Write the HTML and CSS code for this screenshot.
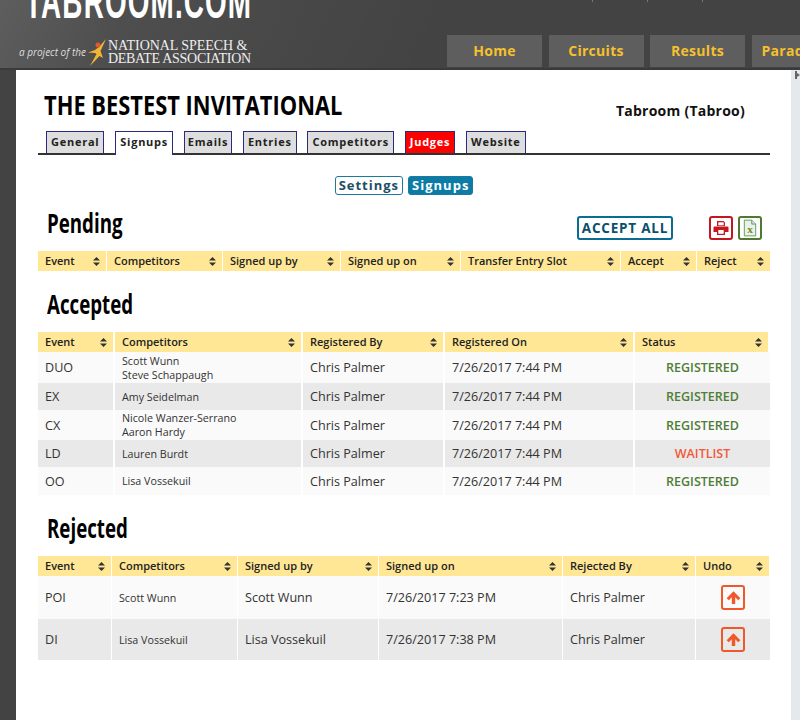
FILE: index.html
```html
<!DOCTYPE html>
<html lang="en">
<head>
<meta charset="utf-8">
<title>Tabroom</title>
<link rel="stylesheet" href="styles.css">
</head>
<body>
<header class="site-head">
  <div class="brand">
    <div class="wordmark"><span class="wordmark-text">TABROOM.COM</span></div>
    <div class="project">
      <span class="project-of">a project of the</span>
      <svg class="nsda-mark" viewBox="0 0 20 30" width="20" height="30" aria-hidden="true">
        <path d="M18 2 L11 10 L7 13 L0 15.5 L7 16 L8.5 17 L2 29 L11.5 19 L15 21 L12.5 14 Z" fill="#f2b632"/>
        <circle cx="10" cy="8" r="2.5" fill="#e4572e"/>
      </svg>
      <span class="nsda-name"><span class="nsda-top">NATIONAL SPEECH &amp;</span><span>DEBATE ASSOCIATION</span></span>
    </div>
  </div>
  <div class="head-right">
    <div class="ticks"><span></span><span></span><span></span></div>
    <nav class="main-nav">
      <a class="nav-btn">Home</a>
      <a class="nav-btn">Circuits</a>
      <a class="nav-btn">Results</a>
      <a class="nav-btn nav-last">Paradigms</a>
    </nav>
  </div>
</header>
<div class="page">
  <main class="content">
    <div class="title-row">
      <h1 class="title"><span class="squeeze">THE BESTEST INVITATIONAL</span></h1>
      <div class="source">Tabroom (Tabroo)</div>
    </div>
    <ul class="tabs">
      <li class="tab">General</li>
      <li class="tab tab-active">Signups</li>
      <li class="tab tab-tight">Emails</li>
      <li class="tab">Entries</li>
      <li class="tab">Competitors</li>
      <li class="tab tab-red">Judges</li>
      <li class="tab">Website</li>
    </ul>
    <div class="subnav">
      <a class="pill">Settings</a>
      <a class="pill pill-on">Signups</a>
    </div>

    <div class="pending-head">
      <h2 class="section"><span class="squeeze-more">Pending</span></h2>
      <div class="actions">
        <a class="accept-all">ACCEPT ALL</a>
        <a class="icon-btn icon-red">
          <svg viewBox="0 0 16 16" width="16" height="16" aria-hidden="true"><path d="M4 1h6.5L12 2.5V6H4zM1.5 6.5h13a1 1 0 0 1 1 1V12H12v3H4v-3H.5V7.5a1 1 0 0 1 1-1z" fill="#c4161c"/><rect x="5.3" y="10" width="5.4" height="3.8" fill="#fff"/><rect x="5.3" y="2.3" width="5.4" height="3" fill="#fff"/></svg>
        </a>
        <a class="icon-btn icon-green">
          <svg viewBox="0 0 16 20" width="14" height="18" aria-hidden="true"><path d="M1.5 1H10l4.5 4.5V19h-13z" fill="#e6f3ea" stroke="#5f8f4a" stroke-width="1"/><path d="M10 1v4.5h4.5" fill="#cfe6ee" stroke="#5f8f4a" stroke-width="1"/><text x="8" y="16" class="xls-x">x</text></svg>
        </a>
      </div>
    </div>
    <div class="grid grid-pending">
      <div class="th">Event<svg class="sort" viewBox="0 0 7 9" aria-hidden="true"><path d="M3.5 0 7 3.6H0zM3.5 9 0 5.4h7z"/></svg></div>
      <div class="th">Competitors<svg class="sort" viewBox="0 0 7 9" aria-hidden="true"><path d="M3.5 0 7 3.6H0zM3.5 9 0 5.4h7z"/></svg></div>
      <div class="th">Signed up by<svg class="sort" viewBox="0 0 7 9" aria-hidden="true"><path d="M3.5 0 7 3.6H0zM3.5 9 0 5.4h7z"/></svg></div>
      <div class="th">Signed up on<svg class="sort" viewBox="0 0 7 9" aria-hidden="true"><path d="M3.5 0 7 3.6H0zM3.5 9 0 5.4h7z"/></svg></div>
      <div class="th">Transfer Entry Slot<svg class="sort" viewBox="0 0 7 9" aria-hidden="true"><path d="M3.5 0 7 3.6H0zM3.5 9 0 5.4h7z"/></svg></div>
      <div class="th">Accept<svg class="sort" viewBox="0 0 7 9" aria-hidden="true"><path d="M3.5 0 7 3.6H0zM3.5 9 0 5.4h7z"/></svg></div>
      <div class="th">Reject<svg class="sort" viewBox="0 0 7 9" aria-hidden="true"><path d="M3.5 0 7 3.6H0zM3.5 9 0 5.4h7z"/></svg></div>
    </div>

    <h2 class="section section-accepted"><span class="squeeze-more">Accepted</span></h2>
    <div class="grid grid-accepted">
      <div class="th">Event<svg class="sort" viewBox="0 0 7 9" aria-hidden="true"><path d="M3.5 0 7 3.6H0zM3.5 9 0 5.4h7z"/></svg></div>
      <div class="th">Competitors<svg class="sort" viewBox="0 0 7 9" aria-hidden="true"><path d="M3.5 0 7 3.6H0zM3.5 9 0 5.4h7z"/></svg></div>
      <div class="th">Registered By<svg class="sort" viewBox="0 0 7 9" aria-hidden="true"><path d="M3.5 0 7 3.6H0zM3.5 9 0 5.4h7z"/></svg></div>
      <div class="th">Registered On<svg class="sort" viewBox="0 0 7 9" aria-hidden="true"><path d="M3.5 0 7 3.6H0zM3.5 9 0 5.4h7z"/></svg></div>
      <div class="th">Status<svg class="sort" viewBox="0 0 7 9" aria-hidden="true"><path d="M3.5 0 7 3.6H0zM3.5 9 0 5.4h7z"/></svg></div>

      <div class="td">DUO</div>
      <div class="td td-small"><span>Scott Wunn</span><span>Steve Schappaugh</span></div>
      <div class="td">Chris Palmer</div>
      <div class="td">7/26/2017 7:44 PM</div>
      <div class="td td-status st-ok">REGISTERED</div>

      <div class="td alt">EX</div>
      <div class="td td-small alt">Amy Seidelman</div>
      <div class="td alt">Chris Palmer</div>
      <div class="td alt">7/26/2017 7:44 PM</div>
      <div class="td td-status st-ok alt">REGISTERED</div>

      <div class="td">CX</div>
      <div class="td td-small"><span>Nicole Wanzer-Serrano</span><span>Aaron Hardy</span></div>
      <div class="td">Chris Palmer</div>
      <div class="td">7/26/2017 7:44 PM</div>
      <div class="td td-status st-ok">REGISTERED</div>

      <div class="td alt">LD</div>
      <div class="td td-small alt">Lauren Burdt</div>
      <div class="td alt">Chris Palmer</div>
      <div class="td alt">7/26/2017 7:44 PM</div>
      <div class="td td-status st-wait alt">WAITLIST</div>

      <div class="td">OO</div>
      <div class="td td-small">Lisa Vossekuil</div>
      <div class="td">Chris Palmer</div>
      <div class="td">7/26/2017 7:44 PM</div>
      <div class="td td-status st-ok">REGISTERED</div>
    </div>

    <h2 class="section section-rejected"><span class="squeeze-more">Rejected</span></h2>
    <div class="grid grid-rejected">
      <div class="th">Event<svg class="sort" viewBox="0 0 7 9" aria-hidden="true"><path d="M3.5 0 7 3.6H0zM3.5 9 0 5.4h7z"/></svg></div>
      <div class="th">Competitors<svg class="sort" viewBox="0 0 7 9" aria-hidden="true"><path d="M3.5 0 7 3.6H0zM3.5 9 0 5.4h7z"/></svg></div>
      <div class="th">Signed up by<svg class="sort" viewBox="0 0 7 9" aria-hidden="true"><path d="M3.5 0 7 3.6H0zM3.5 9 0 5.4h7z"/></svg></div>
      <div class="th">Signed up on<svg class="sort" viewBox="0 0 7 9" aria-hidden="true"><path d="M3.5 0 7 3.6H0zM3.5 9 0 5.4h7z"/></svg></div>
      <div class="th">Rejected By<svg class="sort" viewBox="0 0 7 9" aria-hidden="true"><path d="M3.5 0 7 3.6H0zM3.5 9 0 5.4h7z"/></svg></div>
      <div class="th">Undo<svg class="sort" viewBox="0 0 7 9" aria-hidden="true"><path d="M3.5 0 7 3.6H0zM3.5 9 0 5.4h7z"/></svg></div>

      <div class="td">POI</div>
      <div class="td td-small">Scott Wunn</div>
      <div class="td">Scott Wunn</div>
      <div class="td">7/26/2017 7:23 PM</div>
      <div class="td">Chris Palmer</div>
      <div class="td td-undo"><a class="undo"><svg viewBox="0 0 14 14" width="15" height="15" aria-hidden="true"><path d="M7 1.2 13.4 7.6 11.4 9.6 8.6 6.8V13H5.4V6.8L2.6 9.6.6 7.6z" fill="#f0582b"/></svg></a></div>

      <div class="td alt">DI</div>
      <div class="td td-small alt">Lisa Vossekuil</div>
      <div class="td alt">Lisa Vossekuil</div>
      <div class="td alt">7/26/2017 7:38 PM</div>
      <div class="td alt">Chris Palmer</div>
      <div class="td td-undo alt"><a class="undo"><svg viewBox="0 0 14 14" width="15" height="15" aria-hidden="true"><path d="M7 1.2 13.4 7.6 11.4 9.6 8.6 6.8V13H5.4V6.8L2.6 9.6.6 7.6z" fill="#f0582b"/></svg></a></div>
    </div>
  </main>
  <aside class="rail"><svg class="rail-mark" viewBox="0 0 5 8" width="5" height="8" aria-hidden="true"><path d="M0 0h2v8H0zM2 2l3 2-3 2z" fill="#666"/></svg></aside>
</div>
</body>
</html>
```
FILE: styles.css
```css
* { box-sizing: border-box; }
html, body { margin: 0; padding: 0; height: 720px; overflow: hidden; }
body {
  background: #434343;
  font-family: "Open Sans", "Noto Sans", sans-serif;
  color: #222;
  width: 800px;
}
.site-head {
  height: 70px;
  display: flex;
  justify-content: space-between;
  overflow: hidden;
  background:
    linear-gradient(115deg, rgba(255,255,255,.14) 0, rgba(255,255,255,.06) 16%, rgba(255,255,255,.02) 40%, rgba(255,255,255,0) 55%),
    #434343;
  border-bottom: 2px solid #3a3a3a;
}
.brand { padding-left: 19px; width: 447px; flex: none; }
.wordmark {
  margin-top: -23px;
  margin-left: 6px;
  height: 50px;
  line-height: 50px;
  font-family: "Liberation Sans", sans-serif;
  font-size: 48px;
  font-weight: 700;
  letter-spacing: 2px;
  color: #fff;
  white-space: nowrap;
}
.wordmark-text { display: inline-block; transform: scaleX(.58); transform-origin: left center; }
.project { display: flex; align-items: center; margin-top: 10px; height: 30px; }
.project-of { font-size: 10px; font-style: italic; color: #ddd; width: 69px; white-space: nowrap; }
.nsda-mark { flex: none; }
.nsda-name {
  display: flex;
  flex-direction: column;
  font-family: "Liberation Serif", serif;
  font-size: 14px;
  line-height: 13px;
  color: #eee;
  letter-spacing: -.3px;
  white-space: nowrap;
  margin-left: 0;
}
.nsda-top { letter-spacing: -.05px; }
.head-right { flex: 1; min-width: 0; display: flex; flex-direction: column; }
.ticks { display: flex; height: 2px; padding-left: 145px; gap: 54px; flex: none; }
.ticks span { width: 1px; background: #777; }
.main-nav { display: flex; gap: 6.5px; margin-top: 33px; }
.nav-btn {
  flex: none;
  width: 95px;
  height: 32px;
  line-height: 32px;
  background: #5e5e5e;
  color: #f6c02e;
  font-size: 14px;
  font-weight: 700;
  letter-spacing: .3px;
  text-align: center;
}
.nav-last { text-align: left; padding-left: 10px; }

.page { display: flex; height: 650px; margin-left: 16px; }
.content { width: 775px; flex: none; background: #fff; padding: 0 21px 0 22px; }
.rail { flex: 1; background: #e5e9ec; padding: 1px 0 0 4px; }
.rail-mark { display: block; }

.title-row { display: flex; justify-content: space-between; align-items: center; height: 61px; padding: 0 25px 0 6px; }
.title {
  margin: 8px 0 0;
  font-size: 27px;
  font-weight: 700;
  color: #000;
  line-height: 32px;
  white-space: nowrap;
}
.squeeze { display: inline-block; transform: scaleX(.81); transform-origin: left center; }
.squeeze-more { display: inline-block; transform: scaleX(.72); transform-origin: left center; }
.source { font-size: 14px; font-weight: 700; color: #111; letter-spacing: .25px; margin-top: 19px; }

.tabs {
  list-style: none;
  margin: 0;
  padding: 0 0 0 8px;
  display: flex;
  gap: 10.8px;
  height: 24px;
  border-bottom: 2px solid #333;
}
.tab {
  height: 22px;
  line-height: 20px;
  padding: 0 4px;
  background: #dedede;
  border: 1px solid #2a2a80;
  border-bottom: none;
  font-size: 11px;
  font-weight: 700;
  letter-spacing: .75px;
  color: #222;
}
.tab-tight { padding: 0 3px; }
.tab-active { background: #fff; height: 24px; position: relative; }
.tab-red { background: #f00; color: #fff; }

.subnav { display: flex; justify-content: center; gap: 5px; margin-top: 21px; height: 20px; }
.pill {
  height: 19px;
  line-height: 17px;
  padding: 0 3px;
  border: 1px solid #1b7a9e;
  border-radius: 3px;
  font-size: 13px;
  font-weight: 700;
  letter-spacing: 1px;
  color: #1d4f66;
}
.pill-on { background: #0c7ba6; color: #fff; }

.pending-head { display: flex; justify-content: space-between; align-items: flex-start; height: 43px; margin-top: 12px; }
.section { margin: 0; font-size: 26px; line-height: 30px; font-weight: 700; color: #000; padding-left: 9px; height: 30px; }
.actions { display: flex; align-items: flex-start; padding-right: 8px; margin-top: 8px; }
.accept-all {
  width: 96px;
  height: 24px;
  line-height: 20px;
  margin-right: 36px;
  text-align: center;
  border: 2px solid #0a6c93;
  border-radius: 3px;
  font-size: 13.5px;
  font-weight: 700;
  letter-spacing: .8px;
  color: #0a4f6c;
}
.icon-btn {
  width: 24px;
  height: 24px;
  border: 2px solid;
  border-radius: 3px;
  display: flex;
  align-items: center;
  justify-content: center;
}
.icon-red { border-color: #c4161c; margin-right: 5px; }
.icon-green { border-color: #4d7a30; }
.xls-x { font-family: "Liberation Serif", serif; font-size: 13px; font-weight: 700; fill: #7a8a20; text-anchor: middle; }

.grid { display: grid; width: 732px; }
.grid-pending { grid-template-columns: 69px 116px 118px 120px 160px 76px 73px; grid-template-rows: 20px; }
.grid-accepted { grid-template-columns: 77px 188px 142px 190px 135px; grid-template-rows: 20px 31px 27px 30px 27px 28px; }
.grid-rejected { grid-template-columns: 74px 126px 141px 184px 133px 74px; grid-template-rows: 20px 43px 41px; }
.section-accepted { margin-top: 18px; margin-bottom: 13px; }
.section-rejected { margin-top: 18px; margin-bottom: 13px; }

.th {
  display: flex;
  align-items: center;
  justify-content: space-between;
  padding: 0 6px 2px 7px;
  background: #ffe795;
  border-right: 1px solid #fff;
  font-size: 11px;
  font-weight: 600;
  color: #222;
  white-space: nowrap;
}
.th:last-child { border-right: none; }
.grid-accepted .th, .grid-accepted .td { border-right-width: 2px; }
.sort { width: 7px; height: 9px; fill: #333; flex: none; margin-bottom: -2px; }
.td {
  display: flex;
  flex-direction: column;
  justify-content: center;
  padding: 0 7px;
  background: #fafafa;
  border-right: 1px solid #fff;
  font-size: 12.6px;
  color: #333;
  white-space: nowrap;
}
.alt { background: #e9e9e9; }
.td-small { font-size: 10.7px; line-height: 14px; }
.td-status { align-items: center; font-weight: 600; font-size: 12.5px; }
.grid-accepted .td-status { border-right: none; }
.st-ok { color: #4f7d35; }
.st-wait { color: #f0593a; }
.td-undo { align-items: center; border-right: none; padding: 0; }
.undo {
  width: 24px;
  height: 25px;
  border: 2px solid #f0582b;
  border-radius: 3px;
  display: flex;
  align-items: center;
  justify-content: center;
}
```
